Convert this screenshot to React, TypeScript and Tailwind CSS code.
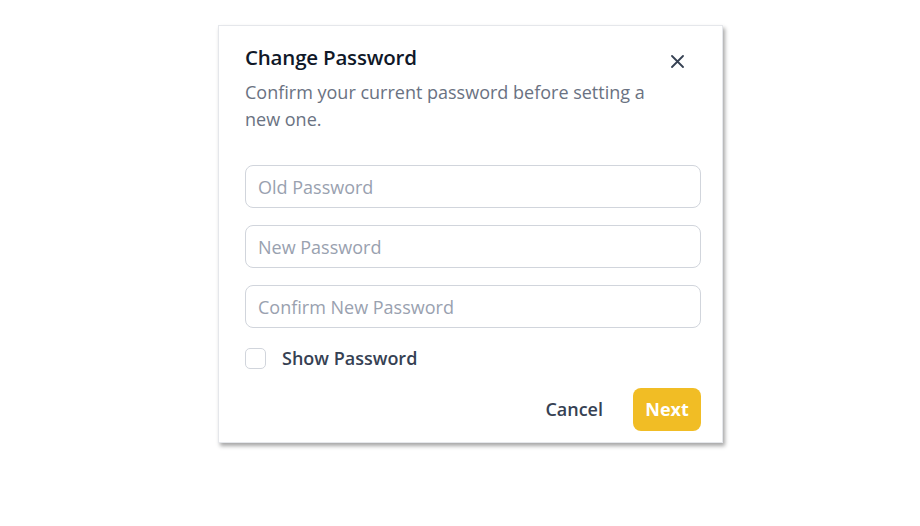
import { useState } from "react";

const ChangePasswordModal = () => {
    const [show, setShow] = useState(false);
    return (
        <div className="w-[920px] h-[526px] bg-white pt-[25px] pl-[218px]" style={{ fontFamily: "'Open Sans', 'Noto Sans', sans-serif" }}>
            <div className="w-[505px] h-[418px] bg-white border border-gray-200 shadow-[2px_3px_4px_rgba(0,0,0,0.35)] px-[26px] pt-[16px]">
                <div className="flex justify-between items-start">
                    <h3 className="text-[20.5px] leading-[30px] font-semibold text-gray-900 tracking-[-0.2px]">Change Password</h3>
                    <button className="mt-[13px] mr-[12px] text-gray-700">
                        <svg width="13" height="13" viewBox="0 0 13 13" fill="none" stroke="currentColor" strokeWidth="1.8" strokeLinecap="round">
                            <path d="M1 1L12 12M12 1L1 12" />
                        </svg>
                    </button>
                </div>
                <p className="mt-[7px] text-[18px] leading-[27px] text-gray-500 w-[405px]">
                    Confirm your current password before setting a new one.
                </p>
                <div className="mt-[32px] flex flex-col gap-[17px] w-[456px]">
                    {["Old Password", "New Password", "Confirm New Password"].map((p) => (
                        <input
                            key={p}
                            type={show ? "text" : "password"}
                            placeholder={p}
                            className="h-[43px] rounded-lg border border-gray-300 px-[12px] text-[18px] text-gray-900 placeholder:text-gray-400 outline-none"
                        />
                    ))}
                </div>
                <label className="mt-[17px] flex items-center gap-[16px] cursor-pointer">
                    <input
                        type="checkbox"
                        checked={show}
                        onChange={() => setShow(!show)}
                        className="appearance-none w-[21px] h-[21px] rounded-[5px] border border-gray-300 bg-white"
                    />
                    <span className="text-[18px] leading-[26px] font-semibold text-gray-700">Show Password</span>
                </label>
                <div className="mt-[17px] flex justify-end items-center gap-[30px] w-[456px]">
                    <button className="text-[18px] font-semibold text-gray-700">Cancel</button>
                    <button className="h-[43px] w-[68px] rounded-lg bg-[#f1bd25] text-white text-[18px] font-bold">Next</button>
                </div>
            </div>
        </div>
    );
};

export default function App() {
    return <ChangePasswordModal />;
}
